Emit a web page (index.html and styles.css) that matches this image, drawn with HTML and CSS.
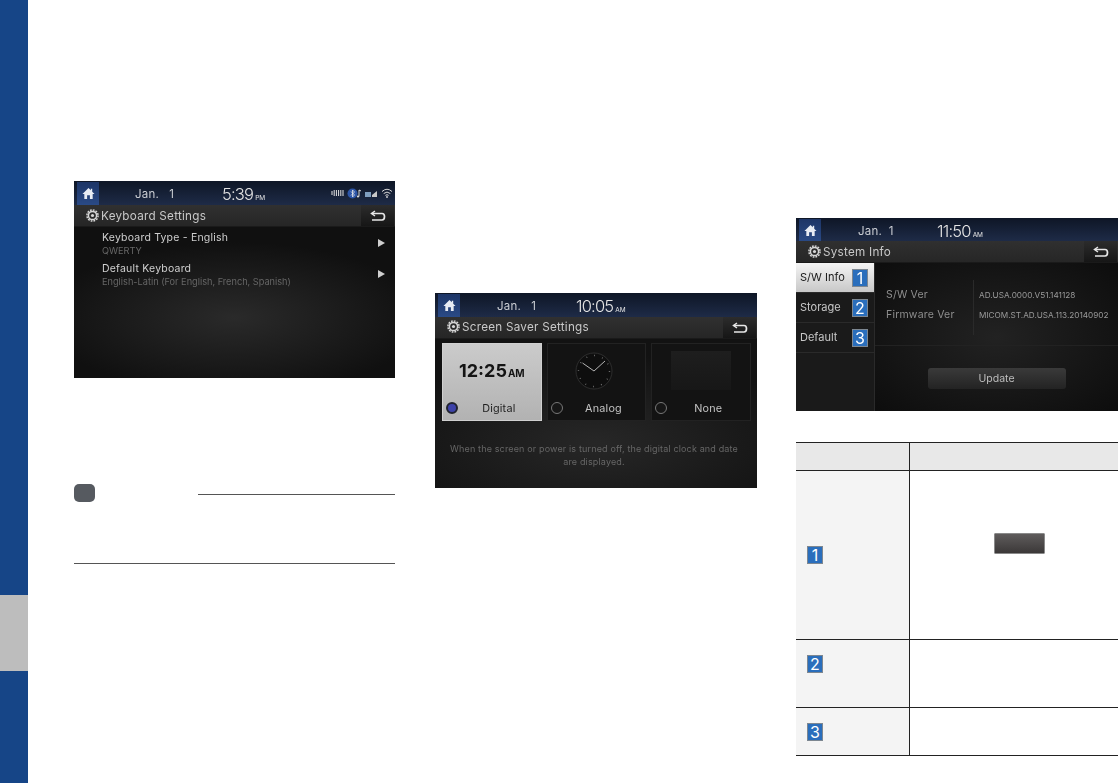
FILE: index.html
```html
<!DOCTYPE html>
<html lang="en">
<head>
  <meta charset="UTF-8">
  <title>Settings</title>
  <link rel="stylesheet" href="styles.css">
</head>
<body>
  <svg class="defs" width="0" height="0">
    <symbol id="home" viewBox="0 0 14 14"><path d="M7 1 L9.5 3.5 V2 H11 V5 L13.5 7.5 H11.5 V13 H8.5 V9 H5.5 V13 H2.5 V7.5 H0.5 Z" fill="#e8ecf4"/></symbol>
    <symbol id="back" viewBox="0 0 16 12"><path d="M5 1 L1.5 3.5 L5 6" fill="none" stroke="#e6e6e6" stroke-width="1.5"/><path d="M2 3.5 H12 Q14.5 3.5 14.5 6.5 Q14.5 10 12 10 H2" fill="none" stroke="#e6e6e6" stroke-width="1.7"/></symbol>
    <symbol id="gear" viewBox="0 0 14 14"><circle cx="7" cy="7" r="4.4" fill="none" stroke="#d8d8d8" stroke-width="1.6"/><circle cx="7" cy="7" r="6" fill="none" stroke="#d8d8d8" stroke-width="1.6" stroke-dasharray="1.9 1.2"/><circle cx="7" cy="7" r="1.7" fill="#d8d8d8"/></symbol>
  </svg>

  <div class="page">
    <div class="side">
      <div class="side-blue side-top"></div>
      <div class="side-grey"></div>
      <div class="side-blue side-bottom"></div>
    </div>

    <div class="col col-1">
      <div class="screen screen-1">
        <div class="topbar">
          <div class="home"><svg width="13" height="13"><use href="#home"/></svg></div>
          <span class="date date-1">Jan.&nbsp;&nbsp;&nbsp;1</span>
          <span class="clock">5:39<small>PM</small></span>
          <div class="status">
            <svg width="13" height="8" viewBox="0 0 13 8"><path d="M1 2V6M3.2 1V7M5.4 1V7M7.6 1V7M9.8 1V7M12 1V7" stroke="#e4e4e4" stroke-width="1"/></svg>
            <svg width="15" height="11" viewBox="0 0 15 11"><circle cx="5.5" cy="5.5" r="5" fill="#2d56a8"/><path d="M4 3.5L7.5 7L5.5 9V2L7.5 4L4 7.5" fill="none" stroke="#e8e8e8" stroke-width=".8"/><path d="M12 2V8.5M12 2L14 3" stroke="#ddd" stroke-width="1" fill="none"/><circle cx="11" cy="8.5" r="1.1" fill="#ddd"/></svg>
            <svg width="13" height="8" viewBox="0 0 13 8"><path d="M0 3H6V8H0Z" fill="#7f9fc0"/><path d="M7 8H12V2L7 6Z" fill="#c8c8c8"/></svg>
            <svg width="12" height="10" viewBox="0 0 12 10"><path d="M1 3.5Q6 -1 11 3.5M2.7 5.5Q6 2.6 9.3 5.5M4.4 7.4Q6 6 7.6 7.4" fill="none" stroke="#d8d8d8" stroke-width="1"/><circle cx="6" cy="9" r=".9" fill="#d8d8d8"/></svg>
          </div>
        </div>
        <div class="titlebar">
          <svg class="gear" width="13" height="13"><use href="#gear"/></svg>
          <span class="title">Keyboard Settings</span>
          <div class="back"><svg width="16" height="12"><use href="#back"/></svg></div>
        </div>
        <div class="body list-body">
          <div class="list-item">
            <div><div class="item-name">Keyboard Type - English</div><div class="item-sub">QWERTY</div></div>
            <span class="arrow"></span>
          </div>
          <div class="list-item">
            <div><div class="item-name">Default Keyboard</div><div class="item-sub">English-Latin (For English, French, Spanish)</div></div>
            <span class="arrow"></span>
          </div>
        </div>
      </div>

      <div class="note">
        <div class="note-head">
          <div class="note-badge"></div>
          <div class="note-rule"></div>
        </div>
      </div>
    </div>

    <div class="col col-2">
      <div class="screen screen-2">
        <div class="topbar">
          <div class="home"><svg width="13" height="13"><use href="#home"/></svg></div>
          <span class="date date-2">Jan.&nbsp;&nbsp;&nbsp;1</span>
          <span class="clock clock-2">10:05<small>AM</small></span>
        </div>
        <div class="titlebar">
          <svg class="gear" width="13" height="13"><use href="#gear"/></svg>
          <span class="title">Screen Saver Settings</span>
          <div class="back"><svg width="16" height="12"><use href="#back"/></svg></div>
        </div>
        <div class="body saver-body">
          <div class="tiles">
            <div class="tile tile-on">
              <div class="tile-view"><span class="digital">12:25<small>AM</small></span></div>
              <div class="tile-foot"><span class="radio radio-on"></span><span class="tile-label">Digital</span></div>
            </div>
            <div class="tile">
              <div class="tile-view">
                <svg class="analog" width="38" height="38" viewBox="0 0 38 38">
                  <circle cx="19" cy="19" r="18" fill="#0e0e0e" stroke="#3a3a3a" stroke-width=".7"/>
                  <circle cx="19" cy="19" r="15.5" fill="none" stroke="#8a8a8a" stroke-width="1.4" stroke-dasharray=".7 7.4"/>
                  <path d="M19 19L7.5 11M19 19L30 9" stroke="#ddd" stroke-width=".8" fill="none"/>
                </svg>
              </div>
              <div class="tile-foot"><span class="radio"></span><span class="tile-label">Analog</span></div>
            </div>
            <div class="tile">
              <div class="tile-view"><div class="blank"></div></div>
              <div class="tile-foot"><span class="radio"></span><span class="tile-label">None</span></div>
            </div>
          </div>
          <p class="saver-text">When the screen or power is turned off, the digital clock and date<br>are displayed.</p>
        </div>
      </div>
    </div>

    <div class="col col-3">
      <div class="screen screen-3">
        <div class="topbar">
          <div class="home"><svg width="13" height="13"><use href="#home"/></svg></div>
          <span class="date date-3">Jan.&nbsp;&nbsp;1</span>
          <span class="clock clock-3">11:50<small>AM</small></span>
        </div>
        <div class="titlebar">
          <svg class="gear" width="13" height="13"><use href="#gear"/></svg>
          <span class="title">System Info</span>
          <div class="back"><svg width="16" height="12"><use href="#back"/></svg></div>
        </div>
        <div class="body info-body">
          <div class="menu">
            <div class="menu-item menu-on"><span>S/W Info</span><b class="num">1</b></div>
            <div class="menu-item"><span>Storage</span><b class="num">2</b></div>
            <div class="menu-item"><span>Default</span><b class="num">3</b></div>
          </div>
          <div class="info">
            <div class="info-top">
              <div class="info-names"><div>S/W Ver</div><div>Firmware Ver</div></div>
              <div class="info-vals"><div>AD.USA.0000.V51.141128</div><div>MICOM.ST.AD.USA.113.20140902</div></div>
            </div>
            <div class="info-bottom"><div class="update">Update</div></div>
          </div>
        </div>
      </div>

      <div class="table">
        <div class="cell cell-head"></div>
        <div class="cell cell-head cell-right"></div>
        <div class="cell cell-left row-1"><b class="num">1</b></div>
        <div class="cell cell-right row-1"><div class="dark-btn"></div></div>
        <div class="cell cell-left row-2"><b class="num">2</b></div>
        <div class="cell cell-right row-2"></div>
        <div class="cell cell-left row-3"><b class="num">3</b></div>
        <div class="cell cell-right row-3"></div>
      </div>
    </div>
  </div>
</body>
</html>
```

FILE: styles.css
```css
* {
  margin: 0;
  box-sizing: border-box;
}
html, body {
  height: 100%;
}
body {
  background: #fff;
  font-family: "Inter", "Liberation Sans", sans-serif;
  overflow: hidden;
}
.defs {
  display: block;
  height: 0;
}
.page {
  display: flex;
  height: 783px;
}

/* left edge tab */
.side {
  width: 28px;
  display: flex;
  flex-direction: column;
  flex: none;
}
.side-blue {
  background: #164587;
}
.side-top {
  height: 595px;
}
.side-grey {
  height: 76px;
  background: #bdbdbd;
}
.side-bottom {
  flex: 1;
}

.col {
  flex: none;
}
.col-1 {
  width: 321px;
  margin-left: 46px;
  padding-top: 181px;
}
.col-2 {
  width: 322px;
  margin-left: 40px;
  padding-top: 293px;
}
.col-3 {
  width: 322px;
  margin-left: 39px;
  padding-top: 218px;
}

/* head unit screens */
.screen {
  display: flex;
  flex-direction: column;
  background: #111;
  color: #ddd;
  filter: blur(0.35px);
}
.screen-1 { height: 197px; }
.screen-2 { height: 195px; }
.screen-3 { height: 193px; }

.topbar {
  height: 24px;
  flex: none;
  display: flex;
  align-items: center;
  padding-left: 3px;
  background: linear-gradient(#0e1626, #1e2b47);
  color: #c9ccd2;
}
.screen-3 .topbar {
  height: 23px;
}
.home {
  width: 22px;
  height: 23px;
  margin-top: 1px;
  display: flex;
  align-items: center;
  justify-content: center;
  background: linear-gradient(#1d3566, #2a4a86);
}
.date {
  font-size: 11.5px;
  letter-spacing: 0.2px;
  margin-top: 2px;
}
.date-1 { margin-left: 36px; width: 87px; }
.date-2 { margin-left: 37px; width: 79px; }
.date-3 { margin-left: 37px; width: 79px; }
.clock {
  font-size: 16.5px;
  font-weight: 300;
  letter-spacing: -0.8px;
  color: #e4e4e4;
  margin-top: 2px;
}
.clock small {
  font-size: 6.5px;
  margin-left: 2px;
  font-weight: 400;
  letter-spacing: 0;
}
.status {
  margin-left: auto;
  padding-right: 2px;
  display: flex;
  align-items: center;
  gap: 3px;
}

.titlebar {
  height: 22px;
  flex: none;
  display: flex;
  align-items: center;
  background: linear-gradient(#303030, #262626);
  border-bottom: 1px solid #1a1a1a;
}
.screen-2 .titlebar {
  padding-bottom: 2px;
}
.gear {
  margin-left: 12px;
  flex: none;
}
.title {
  margin-left: 2px;
  font-size: 11.7px;
  color: #c8c8c8;
  letter-spacing: 0.25px;
}
.back {
  margin-left: auto;
  margin-right: 1px;
  width: 33px;
  height: 21px;
  display: flex;
  align-items: center;
  justify-content: center;
  background: linear-gradient(#2c2c2c, #161616);
}
.screen-2 .back {
  margin-bottom: -2px;
}
.body {
  flex: 1;
  min-height: 0;
}

/* keyboard list */
.list-body {
  padding: 1px 10px 0 28px;
  background: radial-gradient(ellipse 60% 50% at 50% 60%, #2a2a2a, #101010 100%);
}
.list-item {
  height: 31px;
  display: flex;
  align-items: center;
  justify-content: space-between;
}
.item-name {
  font-size: 10.5px;
  line-height: 13px;
  color: #cfcfcf;
  letter-spacing: 0.2px;
}
.item-sub {
  font-size: 9.2px;
  line-height: 13px;
  color: #666;
}
.arrow {
  width: 0;
  height: 0;
  margin-bottom: 2px;
  border-left: 7px solid #cfcfcf;
  border-top: 4px solid transparent;
  border-bottom: 4px solid transparent;
}

/* screen saver tiles */
.saver-body {
  padding: 4px 6px 0 7px;
  background: radial-gradient(ellipse 70% 60% at 50% 70%, #272727, #121212);
}
.tiles {
  display: flex;
  gap: 5px;
}
.tile {
  width: 100px;
  height: 78px;
  display: flex;
  flex-direction: column;
  background: #131313;
  border: 1px solid #222;
}
.tile-on {
  background: linear-gradient(#cbcbcb, #b2b2b2);
  border-color: #d0d0d0;
}
.tile-view {
  flex: 1;
  display: flex;
  align-items: center;
  justify-content: center;
}
.digital {
  font-size: 18px;
  font-weight: 700;
  color: #141414;
}
.digital small {
  font-size: 10px;
  margin-left: 1px;
}
.analog {
  margin-right: 5px;
}
.blank {
  width: 60px;
  height: 39px;
  background: linear-gradient(#1e1e1e, #171717);
}
.tile-foot {
  height: 21px;
  display: flex;
  align-items: center;
  padding-left: 3px;
  padding-right: 1px;
  margin-bottom: 2px;
}
.radio {
  width: 12px;
  height: 12px;
  flex: none;
  border-radius: 50%;
  border: 1px solid #777;
  background: #161616;
}
.radio-on {
  border: 2px solid #20232e;
  background: #3c41a8;
}
.tile-label {
  flex: 1;
  margin-top: 2px;
  text-align: center;
  font-size: 10.8px;
  color: #c4c4c4;
  letter-spacing: 0.2px;
}
.tile-on .tile-label {
  color: #1e1e1e;
}
.saver-text {
  margin-top: 21px;
  padding-right: 5px;
  font-size: 9px;
  line-height: 13px;
  color: #666;
  text-align: center;
  letter-spacing: 0.15px;
}

/* system info */
.info-body {
  display: flex;
}
.menu {
  width: 79px;
  flex: none;
  background: #1a1a1a;
  border-right: 1px solid #2a2a2a;
}
.menu-item {
  height: 30px;
  display: flex;
  align-items: center;
  justify-content: space-between;
  padding: 0 6px 0 4px;
  font-size: 11px;
  color: #c8c8c8;
  border-bottom: 1px solid #2a2a2a;
}
.menu-item span {
  margin-bottom: 2px;
}
.menu-on {
  color: #1a1a1a;
  background: linear-gradient(#f4f4f4, #c8c8c8);
}
.num {
  width: 16px;
  height: 18px;
  flex: none;
  display: flex;
  align-items: center;
  justify-content: center;
  background: #2a6ebc;
  border: 1px solid #7d8791;
  color: #fff;
  font-size: 16px;
  font-weight: 400;
}
.info {
  flex: 1;
  display: flex;
  flex-direction: column;
  background: radial-gradient(ellipse 70% 70% at 50% 50%, #222, #0d0d0d);
}
.info-top {
  height: 83px;
  display: flex;
  padding-top: 17px;
  border-bottom: 1px solid #222;
}
.info-names {
  width: 98px;
  padding: 5px 0 0 11px;
  font-size: 10.5px;
  line-height: 20px;
  color: #8e8e8e;
  letter-spacing: 0.2px;
}
.info-vals {
  padding: 5px 0 0 5px;
  height: 55px;
  margin-bottom: 11px;
  border-left: 1px solid #2a2a2a;
  font-size: 8.2px;
  line-height: 20px;
  color: #9a9a9a;
  white-space: nowrap;
}
.info-bottom {
  flex: 1;
  display: flex;
  justify-content: center;
  padding-top: 22px;
}
.update {
  width: 138px;
  height: 21px;
  display: flex;
  align-items: center;
  justify-content: center;
  border-radius: 3px;
  background: linear-gradient(#3a3a3a, #232323);
  color: #bdbdbd;
  font-size: 10.5px;
}

/* table under system info */
.table {
  margin-top: 31px;
  display: grid;
  grid-template-columns: 113px 1fr;
  grid-template-rows: 28px 169px 68px 48px;
  border-top: 1px solid #222;
}
.cell {
  border-bottom: 1px solid #222;
}
.cell-head {
  background: #e8e8e8;
}
.cell-right {
  border-left: 1px solid #222;
}
.cell-left {
  display: flex;
  align-items: center;
  padding-left: 11px;
  background: #f4f4f4;
}
.row-2.cell-left {
  align-items: flex-start;
  padding-top: 15px;
}
.row-1.cell-right {
  display: flex;
  align-items: center;
  justify-content: center;
  padding: 0 0 23px 11px;
}
.dark-btn {
  width: 51px;
  height: 21px;
  background: linear-gradient(#5f5c5c, #3b3838);
  border: 1px solid #8a8a8a;
  border-radius: 1px;
}

/* note block */
.note {
  margin-top: 106px;
  height: 80px;
  border-bottom: 1px solid #555;
}
.note-head {
  display: flex;
  align-items: center;
}
.note-badge {
  width: 21px;
  height: 18px;
  border-radius: 5px;
  background: #565a60;
}
.note-rule {
  flex: 1;
  margin: 2px 0 0 103px;
  border-top: 1px solid #555;
}
```
